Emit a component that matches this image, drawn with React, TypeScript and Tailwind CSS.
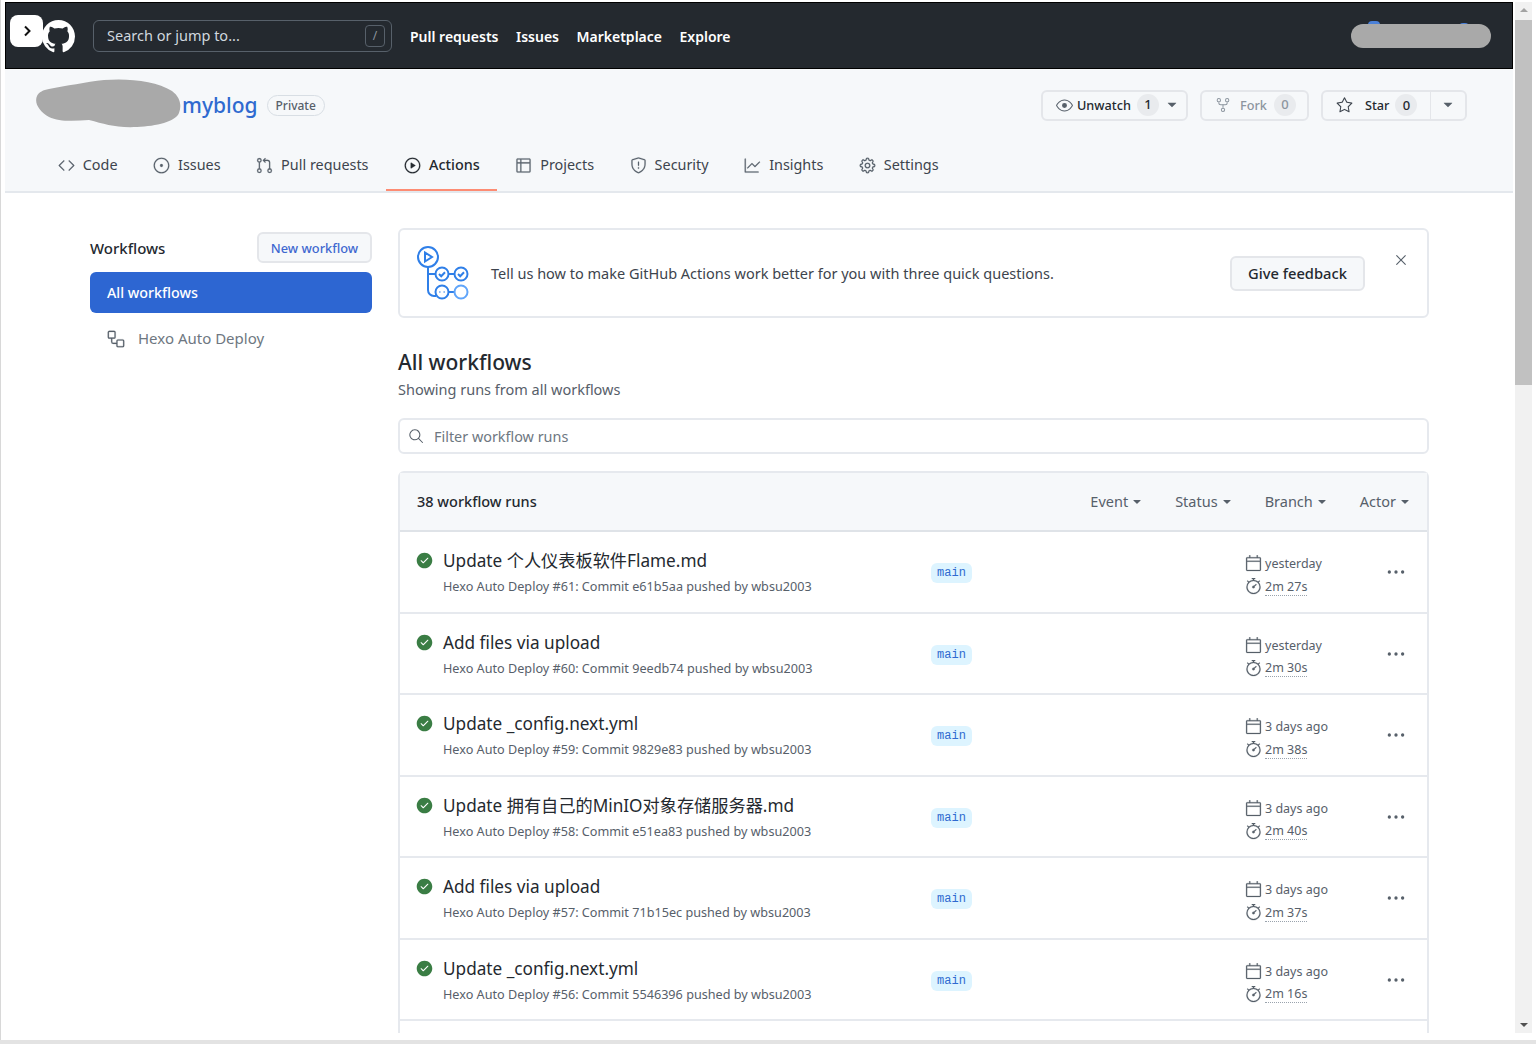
import {
  GoCalendar,
  GoCheckCircleFill,
  GoCode,
  GoEye,
  GoGear,
  GoGitPullRequest,
  GoGraph,
  GoIssueOpened,
  GoKebabHorizontal,
  GoPlay,
  GoRepoForked,
  GoSearch,
  GoShield,
  GoStar,
  GoStopwatch,
  GoTable,
  GoTriangleDown,
  GoWorkflow,
  GoX,
} from 'react-icons/go';

const tabs = [
  { label: 'Code', icon: GoCode },
  { label: 'Issues', icon: GoIssueOpened },
  { label: 'Pull requests', icon: GoGitPullRequest },
  { label: 'Actions', icon: GoPlay, active: true },
  { label: 'Projects', icon: GoTable },
  { label: 'Security', icon: GoShield },
  { label: 'Insights', icon: GoGraph },
  { label: 'Settings', icon: GoGear },
];

const runs = [
  { title: 'Update 个人仪表板软件Flame.md', num: 61, sha: 'e61b5aa', when: 'yesterday', took: '2m 27s' },
  { title: 'Add files via upload', num: 60, sha: '9eedb74', when: 'yesterday', took: '2m 30s' },
  { title: 'Update _config.next.yml', num: 59, sha: '9829e83', when: '3 days ago', took: '2m 38s' },
  { title: 'Update 拥有自己的MinIO对象存储服务器.md', num: 58, sha: 'e51ea83', when: '3 days ago', took: '2m 40s' },
  { title: 'Add files via upload', num: 57, sha: '71b15ec', when: '3 days ago', took: '2m 37s' },
  { title: 'Update _config.next.yml', num: 56, sha: '5546396', when: '3 days ago', took: '2m 16s' },
];

function GithubMark({ className }: { className?: string }) {
  return (
    <svg className={className} width="33" height="33" viewBox="0 0 16 16" fill="currentColor">
      <path d="M8 0c4.42 0 8 3.58 8 8a8.013 8.013 0 0 1-5.45 7.59c-.4.08-.55-.17-.55-.38 0-.27.01-1.13.01-2.2 0-.75-.25-1.23-.54-1.48 1.78-.2 3.65-.88 3.65-3.95 0-.88-.31-1.59-.82-2.15.08-.2.36-1.02-.08-2.12 0 0-.67-.22-2.2.82-.64-.18-1.32-.27-2-.27-.68 0-1.36.09-2 .27-1.53-1.03-2.2-.82-2.2-.82-.44 1.1-.16 1.92-.08 2.12-.51.56-.82 1.28-.82 2.15 0 3.06 1.86 3.75 3.64 3.95-.23.2-.44.55-.51 1.07-.46.21-1.61.55-2.33-.66-.15-.24-.6-.83-1.23-.82-.67.01-.27.38.01.53.34.19.73.9.82 1.13.16.45.68 1.31 2.69.94 0 .67.01 1.3.01 1.49 0 .21-.15.45-.55.38A7.995 7.995 0 0 1 0 8c0-4.42 3.58-8 8-8Z" />
    </svg>
  );
}

function HeroIcon() {
  return (
    <svg className="mt-[2px]" width="56" height="56" viewBox="0 0 56 56" fill="none" stroke="#2f7fe8" strokeWidth="2">
      <circle cx="12" cy="11" r="10" />
      <path d="M9 6.5v9l7-4.5z" />
      <path d="M12 21v23a6 6 0 0 0 6 6h2M12 28h8" />
      <circle cx="26" cy="28" r="6.5" />
      <path d="M23 28l2.2 2.2 3.8-4" />
      <path d="M32.5 28h6" />
      <circle cx="45" cy="28" r="6.5" />
      <path d="M42 28l2.2 2.2 3.8-4" />
      <circle cx="26" cy="46" r="6.5" />
      <path d="M23.5 46h.8M27.7 46h.8" strokeWidth="2" />
      <path d="M32.5 46h6" />
      <circle cx="45" cy="46" r="6.5" stroke="#60a5fa" />
    </svg>
  );
}

function Counter({ value }: { value: string }) {
  return (
    <span className="flex h-[22px] w-[22px] items-center justify-center rounded-full bg-[#e9ebee] text-[13px]">
      {value}
    </span>
  );
}

function RunRow({ run }: { run: (typeof runs)[number] }) {
  return (
    <div className="flex h-[81.5px] shrink-0 border-b-2 border-[#e6e9ee]">
      <div className="w-[43px] shrink-0 pl-[16px] pt-[20px]">
        <GoCheckCircleFill className="text-[#3a7d44]" size={17} />
      </div>
      <div className="w-[488px] shrink-0 pt-[14px]">
        <div className="h-[30px] text-[17.2px] leading-[30px] text-[#24292f]">{run.title}</div>
        <div className="text-[12.65px] leading-[20px] text-[#57606a]">
          Hexo Auto Deploy #{run.num}: Commit {run.sha} pushed by wbsu2003
        </div>
      </div>
      <div className="w-[314px] shrink-0 pt-[26px]">
        <span className="inline-block h-[20px] w-[41px] rounded-md bg-[#ddf4ff] text-center font-['Liberation_Mono',monospace] text-[12px] leading-[20px] text-[#2f6ad0]">
          main
        </span>
      </div>
      <div className="w-[141px] shrink-0 pt-[20px] text-[12.5px] leading-[23px] text-[#57606a]">
        <div className="flex h-[23px] items-center gap-[3px]">
          <GoCalendar className="stroke-[0.3px]" size={17} />
          <span>{run.when}</span>
        </div>
        <div className="flex h-[23px] items-center gap-[3px]">
          <GoStopwatch className="stroke-[0.3px]" size={17} />
          <span className="border-b border-dotted border-[#9aa3ad] leading-[17px]">{run.took}</span>
        </div>
      </div>
      <div className="pt-[30px] text-[#57606a]">
        <GoKebabHorizontal size={20} />
      </div>
    </div>
  );
}

export default function App() {
  return (
    <div className="relative h-[1044px] w-[1536px] overflow-hidden bg-white font-['Noto_Sans','Noto_Sans_CJK_SC',sans-serif]">
      <div className="absolute left-0 top-0 h-full w-[1px] bg-[#d8d8d8]" />
      <div className="flex h-[1033px] pl-[5px] pt-[2px]">
        <div className="flex w-[1508px] shrink-0 flex-col overflow-hidden">
          {/* Top bar */}
          <header className="relative flex h-[67px] shrink-0 items-center border border-black bg-[#24292f] pl-[87px] text-white">
            <div className="flex h-[32px] w-[299px] items-center justify-between rounded-md border border-[#57606a] pl-[13px] pr-[6px] text-[14.5px] text-[#d0d7de]">
              <span>Search or jump to...</span>
              <span className="flex h-[22px] w-[20px] items-center justify-center rounded border border-[#57606a] text-[12px] text-[#8c959f]">
                /
              </span>
            </div>
            <nav className="ml-[18px] flex gap-[17.5px] pt-[1px] text-[14px] font-semibold">
              <span>Pull requests</span>
              <span>Issues</span>
              <span>Marketplace</span>
              <span>Explore</span>
            </nav>
            <GithubMark className="absolute left-[36px] top-[17px]" />
            <div className="absolute left-[4px] top-[12px] flex h-[32px] w-[33px] items-center justify-center rounded-lg bg-white">
              <svg width="10" height="12" viewBox="0 0 10 12" fill="none" stroke="#111" strokeWidth="2">
                <path d="M3 1.5 7.5 6 3 10.5" />
              </svg>
            </div>
            <span className="absolute left-[1362px] top-[18px] h-[8px] w-[12px] rounded-full bg-[#4a80d8]" />
            <span className="absolute left-[1453px] top-[20px] h-[8px] w-[10px] rounded-full bg-[#4a80d8]" />
            <div className="absolute left-[1345px] top-[21px] h-[24px] w-[140px] rounded-full bg-[#a9a9a9]" />
          </header>

          {/* Repo head */}
          <div className="relative flex h-[124px] shrink-0 flex-col border-b-2 border-[#e4e8ed] bg-[#f6f8fa]">
            <svg className="absolute left-[31px] top-[10px]" width="146" height="49" viewBox="0 0 146 49" fill="#a9a9a9">
              <path d="M13 10C30 7 50 3 68 1c25-2 52 1 68 11 8 6 10 14 7 22-4 9-22 13-42 14-22 1-32-3-48-7-14 1-30 2-40-3C3 32-2 24 1 17c2-4 6-6 12-7z" />
            </svg>
            <div className="flex h-[72px] items-center justify-between pl-[177px] pr-[46px]">
              <div className="flex items-center gap-[9px]">
                <span className="text-[21px] font-medium leading-none text-[#2f6ad0]">myblog</span>
                <span className="rounded-full border border-[#d8dee4] px-[8px] text-[12px] font-medium leading-[19px] text-[#57606a]">
                  Private
                </span>
              </div>
              <div className="flex gap-[12px] text-[12.7px] font-medium text-[#24292f]">
                <div className="flex h-[31px] w-[147px] items-center rounded-md border-2 border-[#e4e6ea] pl-[13px]">
                  <GoEye className="text-[#57606a]" size={17} />
                  <span className="ml-[4px] pt-[1px]">Unwatch</span>
                  <span className="ml-[6px]"><Counter value="1" /></span>
                  <GoTriangleDown className="ml-[5px] text-[#57606a]" size={16} />
                </div>
                <div className="flex h-[31px] w-[109px] items-center rounded-md border-2 border-[#e4e6ea] pl-[13px] text-[#8c959f]">
                  <GoRepoForked size={16} />
                  <span className="ml-[9px] pt-[1px]">Fork</span>
                  <span className="ml-[7px]"><Counter value="0" /></span>
                </div>
                <div className="flex h-[31px] w-[146px] items-center rounded-md border-2 border-[#e4e6ea]">
                  <div className="flex w-[108px] items-center border-r border-[#e4e6ea] pl-[13px] leading-[27px]">
                    <GoStar className="text-[#3d444d]" size={17} />
                    <span className="ml-[12px] pt-[1px]">Star</span>
                    <span className="ml-[6px]"><Counter value="0" /></span>
                  </div>
                  <GoTriangleDown className="ml-[9px] text-[#57606a]" size={16} />
                </div>
              </div>
            </div>
            <nav className="flex h-[50px] pl-[35px] text-[14.4px] text-[#3d444d]">
              {tabs.map((tab) => (
                <div
                  key={tab.label}
                  className={
                    tab.active
                      ? 'flex items-center gap-[8px] border-b-2 border-[#fd8c73] px-[17.75px] font-medium text-[#24292f]'
                      : 'flex items-center gap-[8px] px-[17.75px] pb-[2px]'
                  }
                >
                  <tab.icon className={tab.active ? 'stroke-[0.3px] text-[#24292f]' : 'stroke-[0.3px] text-[#57606a]'} size={17} />
                  <span>{tab.label}</span>
                </div>
              ))}
            </nav>
          </div>

          {/* Page body */}
          <div className="flex pl-[85px] pt-[35px]">
            <aside className="w-[282px] shrink-0 pt-[3px]">
              <div className="flex h-[32px] items-center justify-between">
                <span className="pt-[2px] text-[15px] font-medium text-[#24292f]">Workflows</span>
                <span className="flex h-[31px] w-[115px] items-center justify-center rounded-md border-2 border-[#e4e6ea] bg-[#f6f8fa] pt-[3px] text-[12.8px] font-medium text-[#3f68d0]">
                  New workflow
                </span>
              </div>
              <div className="mt-[9px] flex h-[41px] items-center rounded-md bg-[#2d66d2] pl-[17px] text-[14.3px] font-medium text-white">
                All workflows
              </div>
              <div className="mt-[5px] flex h-[41px] items-center gap-[13px] pl-[17px] text-[15px] text-[#6e7781]">
                <GoWorkflow className="stroke-[0.3px] text-[#57606a]" size={18} />
                <span>Hexo Auto Deploy</span>
              </div>
            </aside>

            <main className="ml-[26px] w-[1031px] shrink-0">
              <div className="flex h-[90px] items-center rounded-md border-2 border-[#e6e9ee] pl-[16px]">
                <HeroIcon />
                <span className="ml-[19px] w-[739px] pt-[1px] text-[14.5px] text-[#3d444d]">
                  Tell us how to make GitHub Actions work better for you with three quick questions.
                </span>
                <span className="flex h-[35px] w-[135px] items-center justify-center rounded-md border-2 border-[#e4e6ea] bg-[#f6f8fa] text-[14.7px] font-medium text-[#24292f]">
                  Give feedback
                </span>
                <GoX className="mb-[26px] ml-[27px] text-[#57606a]" size={18} />
              </div>

              <h2 className="mt-[28px] text-[21px] font-medium leading-[32px] text-[#24292f]">All workflows</h2>
              <p className="text-[14.5px] leading-[22px] text-[#57606a]">Showing runs from all workflows</p>

              <div className="mt-[18px] flex h-[36px] items-center rounded-md border-2 border-[#e6e9ee] pl-[8px] text-[14.4px] text-[#6e7781]">
                <GoSearch className="text-[#57606a]" size={16} />
                <span className="ml-[10px] pt-[1px]">Filter workflow runs</span>
              </div>

              <div className="mt-[17px] rounded-t-md border-x-2 border-t-2 border-[#e6e9ee]">
                <div className="flex h-[59px] items-center justify-between border-b-2 border-[#dfe3e8] bg-[#f6f8fa] pl-[17px] pr-[15px] pt-[1px]">
                  <span className="text-[14.5px] font-medium text-[#24292f]">38 workflow runs</span>
                  <div className="flex gap-[31px] text-[14.5px] text-[#57606a]">
                    {['Event', 'Status', 'Branch', 'Actor'].map((f) => (
                      <span key={f} className="flex items-center">
                        {f}
                        <GoTriangleDown className="ml-[2px]" size={14} />
                      </span>
                    ))}
                  </div>
                </div>
                {runs.map((run) => (
                  <RunRow key={run.num} run={run} />
                ))}
                <div className="h-[40px]" />
              </div>
            </main>
          </div>
        </div>

        {/* Scrollbar */}
        <div className="ml-[2px] flex h-[1031px] w-[17px] shrink-0 flex-col items-center justify-between bg-[#f1f1f1] pb-[6px] pt-[6px]">
          <div className="h-0 w-0 border-x-[4px] border-b-[4px] border-x-transparent border-b-[#a3a3a3]" />
          <div className="absolute left-[1515px] top-[20px] h-[365px] w-[17px] bg-[#c1c1c1]" />
          <div className="h-0 w-0 border-x-[4px] border-t-[4px] border-x-transparent border-t-[#505050]" />
        </div>
      </div>
      <div className="absolute bottom-0 left-0 h-[4px] w-full bg-[#e3e3e3]" />
    </div>
  );
}
